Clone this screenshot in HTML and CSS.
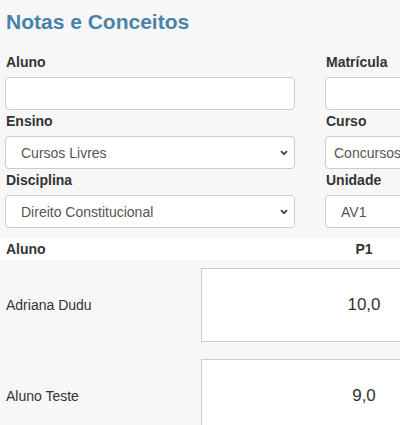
FILE: index.html
```html
<!DOCTYPE html>
<html lang="pt">
<head>
<meta charset="utf-8">
<title>Notas e Conceitos</title>
<link rel="stylesheet" href="styles.css">
</head>
<body>
<div class="page">
  <h1 class="title">Notas e Conceitos</h1>
  <div class="form">
    <div class="field">
      <div class="label">Aluno</div>
      <div class="control"></div>
    </div>
    <div class="field">
      <div class="label">Matrícula</div>
      <div class="control"></div>
    </div>
    <div class="field">
      <div class="label">Ensino</div>
      <div class="control select"><span>Cursos Livres</span><svg class="chev" width="8" height="6" viewBox="0 0 8 6"><polyline points="1,1.2 4,4.2 7,1.2" fill="none" stroke="#444" stroke-width="1.8"/></svg></div>
    </div>
    <div class="field">
      <div class="label">Curso</div>
      <div class="control select narrow"><span>Concursos Públicos</span></div>
    </div>
    <div class="field">
      <div class="label">Disciplina</div>
      <div class="control select"><span>Direito Constitucional</span><svg class="chev" width="8" height="6" viewBox="0 0 8 6"><polyline points="1,1.2 4,4.2 7,1.2" fill="none" stroke="#444" stroke-width="1.8"/></svg></div>
    </div>
    <div class="field">
      <div class="label">Unidade</div>
      <div class="control select"><span>AV1</span></div>
    </div>
  </div>
  <div class="grades">
    <div class="grades-head">
      <div class="col-name">Aluno</div>
      <div class="col-grade">P1</div>
    </div>
    <div class="grade-row">
      <div class="col-name">Adriana Dudu</div>
      <div class="grade-box">10,0</div>
    </div>
    <div class="grade-row">
      <div class="col-name">Aluno Teste</div>
      <div class="grade-box">9,0</div>
    </div>
  </div>
</div>
</body>
</html>
```

FILE: styles.css
```css
html, body {
  margin: 0;
  padding: 0;
  overflow: hidden;
  background: #f7f7f7;
}
body {
  font-family: "Liberation Sans", Arial, sans-serif;
  color: #333;
  width: 400px;
  height: 425px;
}
.page {
  width: 640px;
}
.title {
  margin: 0;
  padding: 10px 0 0 6px;
  font-size: 21px;
  line-height: 24px;
  font-weight: bold;
  color: #4683aa;
}
.form {
  display: grid;
  grid-template-columns: 290px 290px;
  column-gap: 30px;
  padding: 18px 0 0 5px;
}
.field {
  display: flex;
  flex-direction: column;
}
.label {
  font-size: 14px;
  line-height: 20px;
  font-weight: bold;
  color: #333;
  padding-left: 1px;
  margin-bottom: 5px;
}
.control {
  box-sizing: border-box;
  height: 33px;
  margin-bottom: 1px;
  background: #fff;
  border: 1px solid #cccccc;
  border-radius: 4px;
}
.select {
  display: flex;
  align-items: center;
  justify-content: space-between;
  padding: 0 6px 0 15px;
  font-size: 14px;
  color: #555;
  white-space: nowrap;
}
.select.narrow {
  padding-left: 8px;
}
.chev {
  display: block;
  margin-top: 1px;
}
.grades {
  margin-top: 10px;
}
.grades-head {
  display: flex;
  align-items: center;
  height: 21px;
  background: #fff;
  font-size: 14px;
  font-weight: bold;
  line-height: 21px;
}
.col-name {
  box-sizing: border-box;
  width: 201px;
  padding-left: 6px;
  font-size: 14px;
}
.col-grade {
  width: 326px;
  text-align: center;
}
.grade-row {
  display: flex;
  align-items: center;
  padding: 8px 0 9px;
}
.grade-box {
  box-sizing: border-box;
  width: 326px;
  height: 74px;
  background: #fff;
  border: 1px solid #cccccc;
  display: flex;
  align-items: center;
  justify-content: center;
  font-size: 17px;
  color: #333;
}
```
